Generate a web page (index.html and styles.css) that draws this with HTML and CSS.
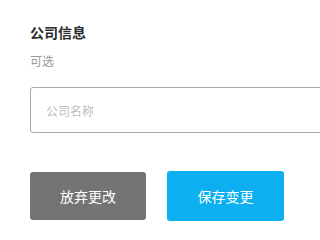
FILE: index.html
```html
<!DOCTYPE html>
<html lang="zh">
<head>
<meta charset="utf-8">
<title>公司信息</title>
<link rel="stylesheet" href="styles.css">
</head>
<body>
<div class="page">
  <div class="title">公司信息</div>
  <div class="subtitle">可选</div>
  <div class="field"><span class="placeholder">公司名称</span></div>
  <div class="actions">
    <button class="btn btn-discard">放弃更改</button>
    <button class="btn btn-save">保存变更</button>
  </div>
</div>
</body>
</html>
```
FILE: styles.css
```css
html, body {
  margin: 0;
  padding: 0;
  background: #ffffff;
  overflow: hidden;
}
body {
  font-family: "Noto Sans CJK SC", "Noto Sans", sans-serif;
}
.page {
  padding: 22px 0 0 30px;
}
.title {
  font-size: 14px;
  line-height: 20px;
  font-weight: 700;
  color: #2b2b2b;
}
.subtitle {
  margin-top: 10px;
  font-size: 12px;
  line-height: 18px;
  color: #9a9a9a;
}
.field {
  margin-top: 17px;
  width: 300px;
  height: 46px;
  box-sizing: border-box;
  border: 1px solid #a8a8a8;
  border-radius: 3px;
  padding-left: 15px;
  display: flex;
  align-items: center;
}
.placeholder {
  font-size: 12px;
  color: #bdbdbd;
}
.actions {
  margin-top: 38px;
  display: flex;
  align-items: center;
  gap: 21px;
}
.btn {
  border: none;
  border-radius: 3px;
  font-family: "Noto Sans CJK SC", "Noto Sans", sans-serif;
  font-size: 14px;
  color: #ffffff;
  padding: 0;
}
.btn-discard {
  width: 116px;
  height: 48px;
  background: #747474;
}
.btn-save {
  width: 117px;
  height: 50px;
  background: #0cb0f0;
}
```
